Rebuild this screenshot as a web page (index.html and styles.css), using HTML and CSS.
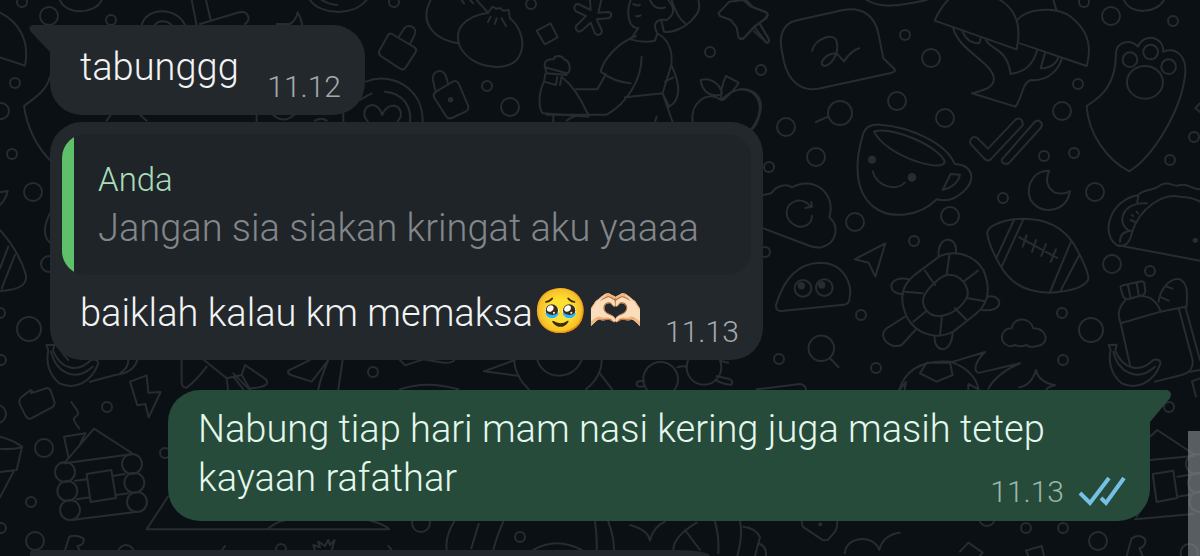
FILE: index.html
```html
<!DOCTYPE html>
<html lang="id">
<head>
    <meta charset="UTF-8">
    <meta name="viewport" content="width=device-width, initial-scale=1.0">
    <title>Chat</title>
    <link rel="stylesheet" href="styles.css">
</head>
<body>
    <svg class="wallpaper" viewBox="0 0 1200 556" preserveAspectRatio="xMinYMin slice" aria-hidden="true">
        <!-- dots -->
        <g>
            <circle cx="22" cy="2" r="5"/><circle cx="49" cy="16" r="9"/><circle cx="111" cy="20" r="5"/><circle cx="15" cy="83" r="5"/>
            <circle cx="1" cy="111" r="8"/><circle cx="12" cy="154" r="5"/><circle cx="33" cy="192" r="9"/><circle cx="49" cy="264" r="8"/>
            <circle cx="29" cy="329" r="12"/><circle cx="0" cy="313" r="5"/><circle cx="1" cy="360" r="5"/><circle cx="-3" cy="414" r="9"/>
            <circle cx="761" cy="70" r="5"/><circle cx="786" cy="127" r="9"/><circle cx="840" cy="113" r="12"/><circle cx="897" cy="101" r="9"/>
            <circle cx="931" cy="58" r="9"/><circle cx="905" cy="35" r="5"/><circle cx="945" cy="118" r="9"/><circle cx="816" cy="157" r="9"/>
            <circle cx="769" cy="167" r="5"/><circle cx="1078" cy="84" r="5"/><circle cx="1062" cy="111" r="9"/><circle cx="1111" cy="16" r="9"/>
            <circle cx="1084" cy="2" r="5"/><circle cx="1173" cy="21" r="5"/><circle cx="1044" cy="156" r="5"/><circle cx="1074" cy="153" r="5"/>
            <circle cx="1170" cy="160" r="5"/><circle cx="1194" cy="137" r="5"/><circle cx="1095" cy="192" r="9"/><circle cx="1003" cy="198" r="5"/>
            <circle cx="855" cy="222" r="9"/><circle cx="950" cy="216" r="9"/><circle cx="914" cy="241" r="5"/><circle cx="861" cy="315" r="5"/>
            <circle cx="779" cy="359" r="5"/><circle cx="876" cy="368" r="5"/><circle cx="1062" cy="313" r="5"/><circle cx="1091" cy="330" r="12"/>
            <circle cx="1063" cy="360" r="5"/><circle cx="1112" cy="264" r="9"/><circle cx="1150" cy="271" r="5"/><circle cx="765" cy="252" r="5"/>
            <circle cx="394" cy="2" r="5"/><circle cx="531" cy="4" r="5"/><circle cx="710" cy="52" r="5"/><circle cx="487" cy="86" r="5"/>
            <circle cx="510" cy="107" r="9"/><circle cx="373" cy="372" r="5"/><circle cx="107" cy="407" r="5"/><circle cx="44" cy="448" r="9"/>
            <circle cx="31" cy="502" r="5"/><circle cx="35" cy="541" r="9"/><circle cx="1" cy="528" r="5"/><circle cx="165" cy="453" r="5"/>
            <circle cx="126" cy="553" r="8"/><circle cx="281" cy="549" r="5"/><circle cx="421" cy="523" r="9"/><circle cx="520" cy="537" r="5"/>
            <circle cx="1169" cy="407" r="5"/><circle cx="1026" cy="528" r="5"/><circle cx="1063" cy="528" r="5"/><circle cx="1098" cy="541" r="9"/>
            <circle cx="987" cy="518" r="8"/>
        </g>
        <!-- top left -->
        <g class="doodle" transform="scale(.3333)">
            <path d="M0 38C55 65 90 120 75 197L0 172"/>
            <path d="M150 230C140 270 110 290 72 318C80 380 110 440 150 480"/>
            <path d="M425 75C440 20 530 20 555 75M465 75C475 60 500 60 515 75"/>
            <path d="M575 0L590 75M618 0L632 60M600 72L718 37C745 30 755 60 735 72"/>
            <path d="M180 0C195 45 285 45 305 0M830 72H870C885 65 890 50 893 37Q902 52 907 75"/>
            <path d="M930 0C960 45 1060 50 1100 0M965 0Q990 15 1012 15"/>
            <path d="M320 362L332 345M420 345L440 362M770 345V365M820 345Q850 372 882 345M945 362Q965 350 980 362M1030 340V365"/>
            <path d="M0 690C35 730 65 780 78 825C80 850 70 868 0 873M25 740L0 805M45 765L5 865"/>
            <path d="M0 577L23 573C20 590 10 605 0 615M150 640C130 680 130 710 150 728"/>
        </g>
        <!-- locks, dumplings, person, apple -->
        <g class="doodle" transform="translate(360 0) scale(.3333)">
            <path d="M96 102L164 142Q172 148 166 158L136 204Q130 212 120 206L62 168Q54 162 58 152L84 106Q89 98 96 102ZM118 108L132 86C145 68 174 84 164 104L150 132"/>
            <path d="M236 270L280 244Q290 240 296 250L324 316Q328 328 318 334L276 354Q264 358 258 348L222 292Q216 280 236 270ZM226 272L218 236C218 208 252 206 258 230L264 250"/>
            <circle class="solid" cx="272" cy="299" r="8"/>
            <path d="M18 245C90 215 190 260 188 366M0 300Q15 290 35 280M75 275C130 280 155 320 150 366M66 345C55 300 5 310 14 350L24 366M66 345C85 300 130 315 122 350L112 366"/>
            <path d="M212 0C180 60 210 115 294 130M350 0L384 38M305 0L312 10M330 0L340 10"/>
            <path d="M384 38C310 50 280 90 300 140C330 200 430 220 470 180C505 135 480 80 450 55L446 30L430 32L420 24L408 26L398 20L384 38ZM392 50L384 66M410 55L404 72M425 55L438 78"/>
            <path d="M530 92L572 70L593 112L554 133Z"/>
            <path d="M690 0L692 30L655 12C640 12 640 30 650 35L678 48L648 78C645 92 655 98 665 92L692 68L705 100C715 110 728 102 725 90L710 58L745 55C758 50 755 36 745 36L715 38L724 0"/>
            <path d="M812 0Q800 30 808 60Q815 85 835 84L812 118Q850 130 885 122L892 100M820 12Q835 20 840 14M828 48Q838 50 842 46M870 0C880 25 900 28 915 22M892 100C875 70 890 55 920 60C950 40 940 20 925 0M905 65L912 95M912 95C940 100 980 80 1000 55C1020 35 1020 20 1015 0M935 0Q950 50 975 70"/>
            <path d="M828 108C770 130 730 180 722 215Q760 245 812 250M892 100C930 120 938 160 934 195L908 280L938 366M845 170C845 240 800 310 740 344H560M648 268H712L738 222M795 292L908 280M934 195C965 260 960 300 928 320L908 280M915 245L940 232"/>
            <path d="M555 202C550 180 565 178 580 178C585 165 605 165 612 178C635 185 632 220 620 220ZM555 202L560 220L620 225M556 222L552 245L588 255L592 230M552 245C535 280 535 325 548 340L685 350Q688 345 680 335C660 290 630 250 605 230L600 255M580 344V366M620 362Q650 340 680 350M890 350L885 366"/>
            <path d="M1075 40L1108 5L1150 0L1170 18L1220 38Q1228 46 1218 56L1182 80L1150 116L1136 114L1130 82L1112 60L1080 48ZM1182 80L1220 128Q1230 128 1226 116L1198 70"/>
            <path d="M1084 300C1040 270 990 310 998 366M1084 300C1140 240 1220 270 1200 340Q1190 380 1174 390M1084 300C1080 270 1090 245 1098 228L1136 248Q1125 270 1090 300M1078 285C1040 290 1025 265 1022 240C1050 232 1080 250 1086 280"/>
        </g>
        <!-- speech balloon, mushrooms, ticks, paw, mug -->
        <g class="doodle" transform="translate(740 0) scale(.3333)">
            <path d="M165 62L310 30C370 20 405 50 415 100L430 175L464 208Q468 214 456 218L235 266C180 275 145 240 132 185L124 145C118 105 130 72 165 62Z"/>
            <path d="M216 152C225 115 285 95 290 125C300 165 270 195 255 198C230 195 255 160 290 160L312 184C325 165 340 150 358 145"/>
            <path d="M18 0L40 22L78 36Q86 44 76 54L40 85L10 116H0M42 94L80 128Q90 128 86 116L62 76M380 0C420 25 470 20 560 0M0 268C50 265 85 320 34 388M228 366L264 350"/>
            <path d="M624 0Q600 25 584 62L830 148C845 80 830 30 780 0M832 60C860 25 940 20 985 45C1035 80 1060 130 1040 198L840 130M940 0L950 32"/>
            <path d="M640 85C655 150 755 185 762 235C762 265 730 270 696 280L826 320C850 290 845 245 875 240C930 245 960 200 966 174M668 95C680 125 700 130 718 130L722 115M738 120C750 150 800 140 812 222C860 215 880 190 892 150M915 160L902 205C930 205 950 190 955 172"/>
            <path d="M712 414Q695 405 690 425Q690 430 694 434L735 478Q744 486 752 478L848 376Q850 360 838 356Q830 354 824 362L744 446ZM786 478L884 366Q894 358 902 366Q910 374 902 384L808 488Q798 496 788 488Q784 484 786 478Z"/>
            <path d="M1128 160C1130 125 1170 115 1194 140C1210 100 1270 105 1270 155C1310 140 1340 170 1336 220C1325 330 1240 470 1168 514C1100 480 1045 400 1040 318C1085 290 1128 255 1128 160Z"/>
            <circle cx="1170" cy="179" r="22"/><circle cx="1232" cy="156" r="22"/><circle cx="1286" cy="200" r="22"/><ellipse cx="1215" cy="247" rx="54" ry="49"/>
            <path d="M1152 0C1170 45 1250 42 1272 0M1380 310L1366 324L1380 336"/>
            <path d="M370 400Q380 372 420 374C510 380 620 430 644 492C700 495 710 540 670 575C640 600 620 605 590 598C540 650 450 660 400 620C340 570 345 480 370 400Z"/>
            <path d="M402 395C450 375 600 440 614 485C610 520 440 470 402 395ZM632 522L660 524C655 550 630 565 608 570ZM398 514C410 560 470 575 494 548"/>
            <circle class="solid" cx="396" cy="479" r="12"/><circle class="solid" cx="516" cy="532" r="13"/>
            <path d="M928 512C870 510 850 580 880 610C910 645 980 635 990 573Q975 585 945 578C915 560 918 535 928 512Z"/>
        </g>
        <!-- cloud, turtle, football, taco, bottle -->
        <g class="doodle" transform="translate(740 180) scale(.3333)">
            <path d="M70 45L94 40C110 15 140 10 156 22C220 -15 290 40 268 112C300 140 290 190 245 202Q230 204 210 198L70 145"/>
            <path d="M216 108C215 135 190 145 170 138C130 120 130 75 170 62Q195 58 212 80M196 84L216 80L214 66"/>
            <path d="M108 375C130 300 170 250 240 248C310 248 340 310 328 360Q325 374 310 374L125 393Q106 394 108 375Z"/>
            <circle cx="189" cy="325" r="25"/><circle cx="253" cy="323" r="25"/><circle class="solid" cx="184" cy="317" r="11"/><circle class="solid" cx="245" cy="315" r="11"/>
            <path d="M436 190L406 290L386 248L344 238Z"/>
            <path d="M600 228C640 210 700 220 730 270C755 330 745 370 710 400L640 455C590 480 530 465 500 410C475 350 485 315 530 280Z"/>
            <path d="M620 285C660 280 690 320 682 350C670 375 640 405 600 408C565 410 545 380 550 355C555 330 600 290 620 285ZM628 226L620 285M714 272L672 304M736 364L680 354M680 420L645 385M600 466L606 408M520 425L560 392M495 335L548 340M555 272L585 315"/>
            <path d="M596 228C590 165 655 165 648 218M505 297C440 285 440 345 490 342M742 350C790 340 795 400 725 390M584 468C580 520 635 525 638 458M498 408L440 445C410 470 450 510 485 495L528 448"/>
            <path d="M742 160C740 140 780 125 820 118C900 110 960 130 1000 190C1030 240 1050 290 1044 300C1030 325 980 335 930 338C860 338 810 310 780 255C760 220 745 190 742 160ZM822 120L770 232M850 118L785 260M992 188L930 336M1018 225L962 332"/>
            <path d="M838 172L952 234M860 166L848 200M888 180L876 216M918 192L904 228M948 208L932 246"/>
            <path d="M800 495C775 480 785 445 815 445C820 410 870 410 880 445C925 445 930 495 890 498Q870 505 860 495Q840 503 825 495Q810 502 800 495Z"/>
            <path d="M206 500A38 38 0 1 1 282 510A38 38 0 0 1 206 500ZM270 535L296 562M50 628L180 612Q196 614 198 628"/>
            <path d="M478 628C500 560 560 540 630 545C690 565 710 600 716 628M630 548L735 516C700 550 700 580 720 578L840 550Q770 580 745 626M540 580L560 548H630L638 585L590 605ZM480 628L498 606L494 628M685 628V612L716 628M888 570Q895 605 945 616Q925 620 920 628M888 570Q875 615 838 622"/>
            <path d="M1130 195C1080 160 1110 60 1195 45C1210 25 1240 35 1262 15C1290 0 1300 25 1320 15C1345 10 1360 30 1380 28M1130 195L1380 242M1130 195C1150 205 1170 190 1175 160C1200 80 1270 40 1320 50Q1360 52 1380 65M1195 45L1192 68M1165 150C1130 130 1145 65 1220 70M1140 185Q1140 155 1172 152M1175 105L1180 108M1190 95L1194 100M1172 120L1186 126"/>
            <circle class="solid" cx="1366" cy="181" r="8"/>
            <path d="M1142 325Q1140 318 1150 316L1204 304Q1214 304 1214 314L1216 335Q1214 344 1206 346L1164 358Q1154 358 1150 350ZM1164 316L1172 355M1190 308L1196 346M1155 362C1130 390 1135 410 1142 430L1262 395C1250 360 1230 350 1206 348M1142 430L1170 555M1262 395L1336 380L1380 540M1316 384L1358 540C1360 570 1345 580 1325 585L1245 605M1380 570L1350 575"/>
            <path d="M1256 365C1260 330 1290 290 1320 298C1345 310 1342 340 1340 380M1280 320L1298 326M1264 352L1286 362"/>
            <path id="banana" d="M1106 495L1130 494L1126 512C1150 570 1200 580 1240 540Q1260 535 1262 550C1240 610 1190 630 1145 610C1110 580 1105 540 1112 510ZM1120 515C1135 575 1190 610 1245 560"/>
            <path d="M1380 595L1356 604L1368 650"/>
        </g>
        <!-- bottom left -->
        <g class="doodle" transform="translate(0 340) scale(.3333)">
            <use href="#banana" x="-967" y="-480"/>
            <path d="M165 0Q185 40 205 60M270 125L345 105Q400 100 412 60M385 60Q385 85 360 100"/>
            <path d="M66 170L92 150L100 158L140 144Q148 144 152 152L164 188Q164 196 156 202L92 236Q84 238 78 230L58 190Q56 178 66 170ZM92 150L94 160"/>
            <path d="M214 186L232 212Q240 225 224 232Q216 240 238 266"/>
            <path d="M390 125L440 106L445 158L482 156L446 232L436 192L412 196Z"/>
            <path d="M545 60V130Q548 146 562 142Q590 120 620 80M612 60L680 115L725 105L735 75L798 118Q810 135 780 142L745 146L700 100M680 115L684 148M725 105L750 148M700 110L730 148M1028 60L1015 148M865 92L930 60M865 92Q862 102 875 106L935 125L985 60M985 60Q960 120 955 148"/>
            <path d="M192 290L256 280L240 312M192 290L205 350M192 370L282 266L400 342ZM400 342L195 370"/>
            <circle cx="195" cy="396" r="30"/><circle cx="202" cy="453" r="30"/><circle cx="210" cy="510" r="30"/><circle cx="396" cy="372" r="30"/><circle cx="403" cy="428" r="30"/><circle cx="411" cy="486" r="30"/>
            <path d="M260 402L334 390L348 474L272 486ZM225 422L262 418M338 408L374 402M230 478L270 472M348 465L385 460M215 540L412 515"/>
            <path d="M0 290Q40 300 66 320L50 390L0 396M0 326Q40 330 66 322M40 396L0 472"/>
            <path d="M504 470L440 568H1168Q1150 550 1110 542M805 565Q830 545 860 540"/>
            <path d="M195 630L208 590Q230 582 250 595Q255 615 232 618L240 632M945 632L940 615L960 622L955 605L975 618L985 600L990 615L1004 600L995 632M665 632L675 618M1165 618L1175 630"/>
        </g>
        <!-- bottom middle -->
        <g class="doodle" transform="translate(400 340) scale(.3333)">
            <path d="M0 60L15 76L70 58L130 68Q155 70 162 62M0 148Q80 120 175 148M345 60L252 94L358 108M342 60Q345 110 386 148M605 60Q605 110 558 148M412 60C430 120 520 125 545 60M598 98L636 148"/>
            <circle cx="782" cy="118" r="52"/><circle cx="912" cy="82" r="52"/>
            <path d="M832 82Q845 76 860 80M732 124Q708 120 710 134Q715 144 735 138M950 108L990 118Q1002 126 994 134Q980 136 945 120M960 62L985 68"/>
            <path d="M162 545Q135 590 140 630M236 552L214 625M310 545Q290 590 280 630M585 545Q592 590 590 630M625 545Q642 590 642 630M400 630Q470 590 545 630M690 555Q745 570 750 602Q760 560 795 545M890 548Q820 590 820 630M855 570L900 630M945 545Q958 590 955 640M1020 545Q1030 580 1012 648M1030 560Q1070 565 1080 592L1065 648M1080 612Q1100 620 1098 648"/>
            <path d="M1205 545L1208 560L1265 598Q1275 604 1285 598L1305 575Q1312 565 1312 545M1335 640C1335 590 1420 580 1438 630C1445 600 1470 580 1500 578"/>
            <circle class="solid" cx="1261" cy="553" r="6"/>
        </g>
        <!-- bottom right -->
        <g class="doodle" transform="translate(960 370) scale(.3333)">
            <path d="M570 200L592 180L705 255M570 270L700 258M578 312L640 302L652 384L590 396ZM652 320L690 314M652 380L690 374M525 448L700 432M530 440L545 415"/>
            <circle cx="708" cy="282" r="30"/><circle cx="714" cy="338" r="30"/><circle cx="718" cy="395" r="30"/><circle cx="688" cy="548" r="26"/>
            <path d="M500 558L515 505Q540 490 556 508Q558 530 538 535L548 558M0 545L25 518L68 548L60 558M205 558L198 542L245 528L252 558"/>
        </g>
    </svg>

    <main class="chat">
        <div class="bubble in short">
            <svg class="tail" viewBox="0 0 21 32" aria-hidden="true"><path d="M21 0H4Q-2 1 2 7L21 27Z"/></svg>
            <p class="text">tabunggg</p>
            <div class="meta"><time>11.12</time></div>
        </div>

        <div class="bubble in">
            <blockquote class="quote">
                <strong>Anda</strong>
                <p>Jangan sia siakan kringat aku yaaaa</p>
            </blockquote>
            <p class="text">baiklah kalau km memaksa<span class="emoji">🥹🫶🏻</span></p>
            <div class="meta"><time>11.13</time></div>
        </div>

        <div class="bubble out">
            <svg class="tail" viewBox="0 0 21 32" aria-hidden="true"><path d="M0 0H17Q23 2 20 8L0 32Z"/></svg>
            <p class="text">Nabung tiap hari mam nasi kering juga masih tetep kayaan rafathar</p>
            <div class="meta">
                <time>11.13</time>
                <svg class="ticks" viewBox="0 0 48 31" role="img" aria-label="Dibaca"><path d="M2 17L12 27L31 2M23 22L28 27L46 2"/></svg>
            </div>
        </div>

        <div class="next"></div>
    </main>
    <div class="scroll-thumb"></div>
</body>
</html>
```
FILE: styles.css
```css
* {
    box-sizing: border-box;
}
body {
    margin: 0;
    height: 100vh;
    overflow: hidden;
    position: relative;
    background-color: #0b1014;
    font-family: Roboto, "Liberation Sans", sans-serif;
    font-weight: 300;
}
p {
    margin: 0;
}
.wallpaper {
    position: absolute;
    top: 0;
    left: 0;
    width: 100%;
    height: 100%;
    fill: none;
    stroke: #272c30;
    stroke-width: 2;
    stroke-linecap: round;
    stroke-linejoin: round;
}
.doodle {
    stroke-width: 6;
}
.solid {
    fill: #272c30;
    stroke: none;
}
.chat {
    position: relative;
    height: 100%;
    display: flex;
    flex-direction: column;
    align-items: flex-start;
    padding: 25px 50px 0;
}
.bubble {
    position: relative;
    flex-shrink: 0;
    max-width: 982px;
    padding: 12px;
    border-radius: 32px;
    font-size: 38px;
    line-height: 49px;
}
.in {
    background-color: #23282c;
    color: #f1f3f4;
    margin-bottom: 7px;
}
.out {
    align-self: flex-end;
    background-color: #264b3a;
    color: #e4f7ec;
    margin-top: 23px;
    padding: 15px 12px 18px;
    border-top-right-radius: 0;
}
.short {
    min-width: 315px;
    padding: 18px 12px 23px;
    border-top-left-radius: 0;
}
.text {
    padding: 0 18px;
}
.tail {
    position: absolute;
    top: 0;
    width: 21px;
    height: 32px;
}
.in .tail {
    right: 100%;
    fill: #23282c;
}
.out .tail {
    left: 100%;
    fill: #264b3a;
}
.quote {
    position: relative;
    overflow: hidden;
    margin: 0 0 14px;
    padding: 22px 52px 22px 36px;
    border-radius: 24px;
    background-color: #1f2428;
    color: #83878a;
}
.quote::before {
    content: "";
    position: absolute;
    top: 0;
    left: 0;
    width: 12px;
    height: 100%;
    background-color: #5fc06c;
}
.quote strong {
    display: block;
    color: #a9dcb9;
    font-size: 33px;
    font-weight: 300;
    line-height: 48px;
}
.quote + .text {
    padding-bottom: 10px;
}
.emoji {
    font-size: 44px;
    line-height: 1;
}
.meta {
    position: absolute;
    right: 24px;
    bottom: 14px;
    display: flex;
    align-items: center;
    gap: 14px;
    color: #a6aaad;
    font-size: 30px;
    line-height: 28px;
}
.out .meta {
    color: #9ab8a7;
}
.ticks {
    width: 48px;
    height: 31px;
    fill: none;
    stroke: #74c1e5;
    stroke-width: 4;
}
/* top edge of the following message */
.next {
    flex: 1;
    width: 680px;
    margin: 29px 0 0 -20px;
    border-radius: 4px 32px 0 0 / 4px 6px 0 0;
    background-color: #23282c;
}
.scroll-thumb {
    position: absolute;
    right: 0;
    bottom: 0;
    width: 12px;
    height: 125px;
    background-color: rgba(140, 145, 148, 0.6);
}
```
